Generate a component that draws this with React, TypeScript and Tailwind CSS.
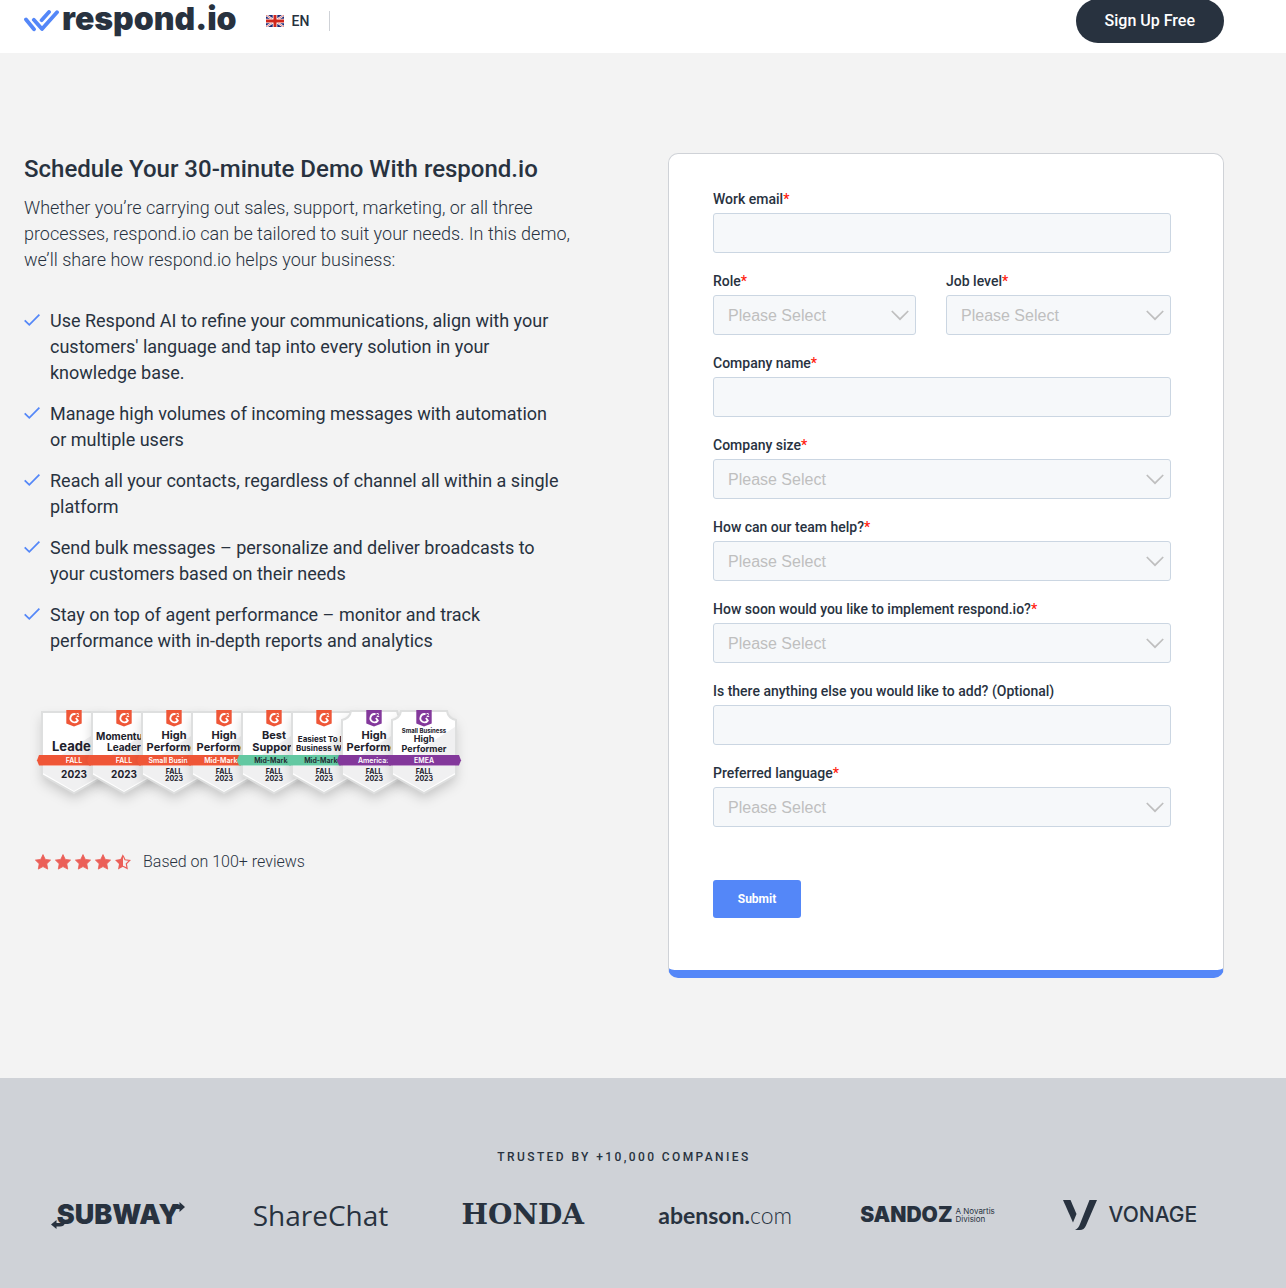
import React from "react";

const ORANGE = "#ef5637";
const GREEN = "#63c8a2";
const PURPLE = "#83389b";

function RespondLogo() {
  return (
    <a href="#" aria-label="respond.io" className="flex items-center text-[#28323f]">
      <svg className="h-[22px] w-[36px] shrink-0" viewBox="0 0 36 22" fill="none" stroke="#5487f8" strokeWidth="3.8" strokeLinecap="round" strokeLinejoin="round" aria-hidden="true">
        <path d="M2 9.5 10 19.2" />
        <path d="M9.8 9.8 18 19 33 2.2" />
        <path d="M25 2 17.6 10.2" />
      </svg>
      <span className="ml-[2px] pb-1 font-[Inter] text-[32px] leading-[38px] font-black">respond.io</span>
    </a>
  );
}

function Flag() {
  return (
    <svg className="h-3 w-[18px]" viewBox="0 0 18 12" aria-hidden="true">
      <rect width="18" height="12" fill="#1f2a78" />
      <path d="M0 0 18 12M18 0 0 12" stroke="#fff" strokeWidth="2.2" />
      <path d="M0 0 18 12M18 0 0 12" stroke="#d0271d" strokeWidth=".6" />
      <path d="M9 0V12M0 6H18" stroke="#fff" strokeWidth="4.6" />
      <path d="M9 0V12M0 6H18" stroke="#d0271d" strokeWidth="3" />
    </svg>
  );
}

function Header() {
  return (
    <header className="bg-white pb-[11px]">
      <div className="flex h-[42px] max-w-[1248px] items-center px-6">
        <RespondLogo />
        <button type="button" className="ml-[29px] flex items-center gap-2 text-sm leading-5 font-medium">
          <Flag />
          EN
        </button>
        <span className="ml-5 h-5 w-px bg-[#cfd2d7]" />
        <a href="#" className="ml-auto flex h-11 items-center rounded-full bg-[#28323f] px-[29px] text-base font-medium whitespace-nowrap text-white">
          Sign Up Free
        </a>
      </div>
    </header>
  );
}

const benefits = [
  "Use Respond AI to refine your communications, align with your customers' language and tap into every solution in your knowledge base.",
  "Manage high volumes of incoming messages with automation or multiple users",
  "Reach all your contacts, regardless of channel all within a single platform",
  "Send bulk messages – personalize and deliver broadcasts to your customers based on their needs",
  "Stay on top of agent performance – monitor and track performance with in-depth reports and analytics",
];

type Line = { text: string; y: number; size: number };
type BadgeData = {
  title: Line[];
  ribbon: string;
  color: string;
  tag: string;
  notched?: boolean;
  bigYear?: boolean;
};

const highPerformer: Line[] = [
  { text: "High", y: 44, size: 11 },
  { text: "Performer", y: 56, size: 11 },
];

const badges: BadgeData[] = [
  { title: [{ text: "Leader", y: 56, size: 13 }], ribbon: "FALL", color: ORANGE, tag: ORANGE, bigYear: true },
  { title: [{ text: "Momentum", y: 45, size: 10 }, { text: "Leader", y: 56, size: 10 }], ribbon: "FALL", color: ORANGE, tag: ORANGE, bigYear: true },
  { title: highPerformer, ribbon: "Small Business", color: ORANGE, tag: ORANGE },
  { title: highPerformer, ribbon: "Mid-Market", color: ORANGE, tag: ORANGE },
  { title: [{ text: "Best", y: 44, size: 11 }, { text: "Support", y: 56, size: 11 }], ribbon: "Mid-Market", color: GREEN, tag: ORANGE },
  { title: [{ text: "Easiest To Do", y: 47, size: 8 }, { text: "Business With", y: 56, size: 8 }], ribbon: "Mid-Market", color: GREEN, tag: ORANGE },
  { title: highPerformer, ribbon: "Americas", color: PURPLE, tag: PURPLE, notched: true },
  { title: [{ text: "Small Business", y: 38, size: 6 }, { text: "High", y: 47, size: 9 }, { text: "Performer", y: 57, size: 9 }], ribbon: "EMEA", color: PURPLE, tag: PURPLE, notched: true },
];

function Badge({ data, x }: { data: BadgeData; x: number }) {
  const outline = data.notched
    ? "M-23 16H23Q24 23 32 25V80L0 98L-32 80V25Q-24 23 -23 16Z"
    : "M-32 17H32V80L0 98L-32 80Z";
  return (
    <g transform={`translate(${x} 0)`} fontFamily="Inter, sans-serif" textAnchor="middle">
      <path d={outline} fill="#fff" filter="url(#badge-shadow)" />
      <path d="M-14 61 31 32V61ZM-31 78V71H31V78L0 96Z" fill="#f0f0f1" />
      <path d={outline} fill="none" stroke="#dedfdf" strokeWidth="2" />
      <path d="M-7.7 15H7.7V28.5L0 31.5L-7.7 28.5Z" fill={data.tag} />
      <path d="M1.6 19.2A4.1 4.1 0 1 0 3.8 25.6L1.9 22.9" fill="none" stroke="#fff" strokeWidth="1.8" />
      <path d="M2.4 18.8Q4.8 17.6 4.6 19.3Q4.3 20.3 2.9 21.5H5.2" fill="none" stroke="#fff" strokeWidth=".9" />
      {data.title.map((line) => (
        <text key={line.text} y={line.y} fontSize={line.size} fontWeight="700" fill="#21212b">
          {line.text}
        </text>
      ))}
      <path d="M-35 60H35L37 65.3L35 70.6H-35L-37 65.3Z" fill={data.color} />
      <text y="68" fontSize="7" fontWeight="600" fill={data.color === GREEN ? "#21212b" : "#fff"}>
        {data.ribbon}
      </text>
      {data.bigYear ? (
        <text y="83" fontSize="10" fontWeight="700" fill="#21212b">2023</text>
      ) : (
        <>
          <text y="79" fontSize="7" fontWeight="700" fill="#21212b">FALL</text>
          <text y="86" fontSize="7" fontWeight="700" fill="#21212b">2023</text>
        </>
      )}
    </g>
  );
}

function Badges() {
  return (
    <svg className="mt-[41px] h-[135px] w-[470px] max-w-full" viewBox="0 0 470 135" role="img" aria-label="G2 awards, Fall 2023">
      <defs>
        <filter id="badge-shadow" x="-40%" y="-20%" width="180%" height="160%">
          <feDropShadow dx="0" dy="6" stdDeviation="6" floodColor="#000" floodOpacity=".18" />
        </filter>
      </defs>
      {badges.map((data, i) => (
        <Badge key={i} data={data} x={50 + i * 50} />
      ))}
    </svg>
  );
}

const STAR = "M8 .6 10.3 5.4 15.6 6.1 11.8 9.8 12.7 15.1 8 12.6 3.3 15.1 4.2 9.8 .4 6.1 5.7 5.4Z";

function Stars() {
  return (
    <div className="flex gap-1" role="img" aria-label="4.5 out of 5 stars">
      {[1, 2, 3, 4].map((n) => (
        <svg key={n} className="size-4" viewBox="0 0 16 16" fill="#eb5f58" stroke="#eb5f58" strokeWidth=".8" aria-hidden="true">
          <path d={STAR} />
        </svg>
      ))}
      <svg className="size-4" viewBox="0 0 16 16" fill="#eb5f58" aria-hidden="true">
        <path d="M8 0V12.800L3 15.500 4 9.900 0 5.900 5.500 5.100Z" />
        <path d="M8 1.500 10 5.800 14.700 6.400 11.300 9.700 12.100 14.400 8 12.200" fill="none" stroke="#eb5f58" strokeWidth="1.2" />
      </svg>
    </div>
  );
}

function Pitch() {
  return (
    <div>
      <h1 className="text-2xl leading-8 font-medium">Schedule Your 30-minute Demo With respond.io</h1>
      <p className="mt-[10px] text-lg leading-[26px] font-light">
        Whether you’re carrying out sales, support, marketing, or all three processes, respond.io can be tailored to suit
        your needs. In this demo, we’ll share how respond.io helps your business:
      </p>
      <ul className="mt-[35px] flex flex-col gap-[15px] pr-4 text-lg leading-[26px]">
        {benefits.map((benefit) => (
          <li key={benefit} className="flex gap-[10px]">
            <svg className="mt-1 size-4 shrink-0" viewBox="0 0 16 16" fill="none" stroke="#5487f8" strokeWidth="1.8" aria-hidden="true">
              <path d="M.7 8.3 5.3 12.8 15.4 2.7" />
            </svg>
            <span>{benefit}</span>
          </li>
        ))}
      </ul>
      <Badges />
      <div className="mt-5 ml-[11px] flex items-center gap-3 leading-6 font-light">
        <Stars />
        Based on 100+ reviews
      </div>
    </div>
  );
}

type FieldProps = { id: string; label: string; required?: boolean; select?: boolean };

function Field({ id, label, required = true, select = false }: FieldProps) {
  const box = "block h-10 w-full rounded-[3px] border border-[#cbd6e2] bg-[#f6f8fa] px-[14px]";
  return (
    <div className="mb-[14px]">
      <label htmlFor={id} className="block text-sm leading-7 font-medium">
        {label}
        {required && <span className="text-[#ff1a0d]">*</span>}
      </label>
      {select ? (
        <div className="relative">
          <select id={id} className={`${box} appearance-none pt-[2px] font-['Liberation_Sans',sans-serif] text-base text-[#bfbfbf]`}>
            <option>Please Select</option>
          </select>
          <svg className="pointer-events-none absolute top-[15px] right-[7px] h-[11px] w-[18px]" viewBox="0 0 18 11" fill="none" stroke="#bfbfbf" strokeWidth="1.7" aria-hidden="true">
            <path d="M.8 1 9 9.2 17.2 1" />
          </svg>
        </div>
      ) : (
        <input id={id} type="text" className={box} />
      )}
    </div>
  );
}

function DemoForm() {
  return (
    <form className="rounded-[10px] border border-b-8 border-[#cfd2d7] border-b-[#5487f8] bg-white pt-[31px] pr-[52px] pb-[52px] pl-11">
      <Field id="email" label="Work email" />
      <div className="grid grid-cols-[203fr_225fr] gap-[30px]">
        <Field id="role" label="Role" select />
        <Field id="level" label="Job level" select />
      </div>
      <Field id="company" label="Company name" />
      <Field id="size" label="Company size" select />
      <Field id="help" label="How can our team help?" select />
      <Field id="when" label="How soon would you like to implement respond.io?" select />
      <Field id="notes" label="Is there anything else you would like to add? (Optional)" required={false} />
      <Field id="language" label="Preferred language" select />
      <button type="button" className="mt-[53px] block h-[38px] w-[88px] rounded-[3px] bg-[#5487f8] text-xs font-bold text-white">
        Submit
      </button>
    </form>
  );
}

function Companies() {
  return (
    <footer className="flex-1 bg-[#cfd2d7]">
      <div className="max-w-[1248px] px-[17px] pt-[68px] pb-[50px]">
        <h2 className="text-center text-xs leading-[22px] font-medium tracking-[0.2em]">TRUSTED BY +10,000 COMPANIES</h2>
        <div className="mt-[27px] grid h-10 grid-cols-6 items-center whitespace-nowrap">
          <div className="flex justify-center">
            <div className="relative px-[6px] font-[Inter] text-[27px] leading-8 font-black">
              SUBWAY
              <svg className="absolute top-[3px] right-0 h-[10px] w-[14px]" viewBox="0 0 14 10" fill="currentColor" aria-hidden="true">
                <path d="M0 7Q1 2.800 5 2.800H8.500V0L14 5L8.500 10V7Z" />
              </svg>
              <svg className="absolute bottom-[2px] left-0 h-[9px] w-[14px]" viewBox="0 0 14 9" fill="currentColor" aria-hidden="true">
                <path d="M14 3Q13 6.500 9 6.500H5.500V9L0 4.500L5.500 0V3Z" />
              </svg>
            </div>
          </div>
          <div className="text-center font-['Open_Sans'] text-[28px] leading-10">ShareChat</div>
          <div className="text-center font-['DejaVu_Serif'] text-[28px] leading-10 font-bold">HONDA</div>
          <div className="text-center font-[Lato] text-[23px] leading-10">
            <span className="font-bold">abenson.</span>
            <span className="font-light">com</span>
          </div>
          <div className="flex items-center justify-center gap-[3px]">
            <span className="font-[Inter] text-[21px] leading-10 font-black">SANDOZ</span>
            <span className="font-[Inter] text-[8px] leading-[8px]">
              A Novartis
              <br />
              Division
            </span>
          </div>
          <div className="flex items-center justify-center gap-3">
            <svg className="h-[30px] w-[34px]" viewBox="0 0 34 30" fill="currentColor" aria-hidden="true">
              <path d="M0 0H7.5L13.5 14 10 22.5Z" />
              <path d="M26.5 0H34L23 25.5Q21 30 17 30H12Q15.500 28.500 17 24Z" />
            </svg>
            <span className="font-[Inter] text-[21px] leading-10 font-medium">VONAGE</span>
          </div>
        </div>
      </div>
    </footer>
  );
}

export default function App() {
  return (
    <div className="flex min-h-screen flex-col bg-[#f3f3f3] font-[Roboto,sans-serif] text-[#28323f]">
      <Header />
      <main className="max-w-[1248px] px-6 py-[100px]">
        <div className="grid gap-[88px] md:grid-cols-2">
          <Pitch />
          <DemoForm />
        </div>
      </main>
      <Companies />
    </div>
  );
}
